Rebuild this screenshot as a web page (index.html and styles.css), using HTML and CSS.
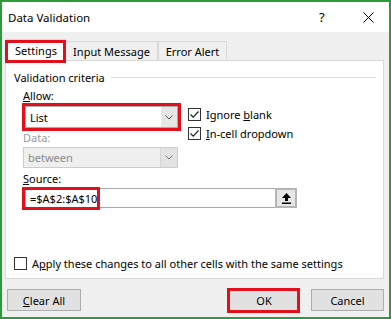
FILE: index.html
```html
<!DOCTYPE html>
<html lang="en">
<head>
  <meta charset="UTF-8" />
  <title>Data Validation</title>
  <link rel="stylesheet" href="styles.css">
</head>
<body>
  <div class="dialog">
    <div class="titlebar">
      <span class="title">Data Validation</span>
      <span class="help">?</span>
      <span class="close">
        <svg width="11" height="11" viewBox="0 0 11 11"><path d="M0.5 0.5 L10.5 10.5 M10.5 0.5 L0.5 10.5" stroke="#000" stroke-width="1" fill="none"/></svg>
      </span>
    </div>

    <div class="content">
      <div class="tabs">
        <div class="tab active tab-settings">Settings<span class="mark"></span></div>
        <div class="tab tab-input">Input Message</div>
        <div class="tab tab-error">Error Alert</div>
      </div>

      <div class="panel">
        <div class="group-title"><span>Validation criteria</span></div>

        <div class="criteria">
          <div class="fields">
            <div class="label"><u>A</u>llow:</div>
            <div class="select marked">
              <span class="value">List</span>
              <span class="drop"><svg width="8" height="5" viewBox="0 0 8 5"><path d="M0.5 0.5 L4 4 L7.5 0.5" stroke="#555" fill="none"/></svg></span>
            </div>
            <div class="label disabled">Data:</div>
            <div class="select disabled">
              <span class="value">between</span>
              <span class="drop"><svg width="8" height="5" viewBox="0 0 8 5"><path d="M0.5 0.5 L4 4 L7.5 0.5" stroke="#777" fill="none"/></svg></span>
            </div>
          </div>

          <div class="checks">
            <div class="check-row">
              <span class="box checked"><svg width="11" height="11" viewBox="0 0 11 11"><path d="M1.5 5.5 L4.2 8.2 L9.5 2.5" stroke="#222" stroke-width="1.2" fill="none"/></svg></span>
              <span>Ignore <u>b</u>lank</span>
            </div>
            <div class="check-row">
              <span class="box checked"><svg width="11" height="11" viewBox="0 0 11 11"><path d="M1.5 5.5 L4.2 8.2 L9.5 2.5" stroke="#222" stroke-width="1.2" fill="none"/></svg></span>
              <span><u>I</u>n-cell dropdown</span>
            </div>
          </div>
        </div>

        <div class="label source-label"><u>S</u>ource:</div>
        <div class="source">
          <div class="source-input">=$A$2:$A$10</div>
          <div class="pick">
            <svg width="11" height="12" viewBox="0 0 11 12"><path d="M5.5 1 L10 6 L7 6 L7 9 L4 9 L4 6 L1 6 Z" fill="#000"/><rect x="1" y="10.5" width="9" height="1.5" fill="#000"/></svg>
          </div>
          <span class="mark source-mark"></span>
        </div>

        <div class="check-row apply">
          <span class="box"></span>
          <span>A<u>p</u>ply these changes to all other cells with the same settings</span>
        </div>
      </div>

      <div class="buttons">
        <button class="btn clear"><u>C</u>lear All</button>
        <div class="right-buttons">
          <button class="btn ok">OK<span class="mark"></span></button>
          <button class="btn cancel">Cancel</button>
        </div>
      </div>
    </div>
  </div>
</body>
</html>
```

FILE: styles.css
```css
body {
  margin: 0;
  font-family: "Noto Sans", "Open Sans", sans-serif;
  font-size: 11px;
  color: #000;
}

.dialog {
  width: 391px;
  height: 319px;
  box-sizing: border-box;
  border: 2px solid #2e9b3b;
  background-color: #f0f0f0;
  display: flex;
  flex-direction: column;
}

.titlebar {
  height: 30px;
  background-color: #fff;
  display: flex;
  align-items: center;
  padding-left: 6px;
  font-size: 11.5px;
}

.title {
  flex: 1;
}

.help {
  width: 8px;
  margin-right: 36px;
  font-size: 13px;
}

.close {
  display: flex;
  margin-right: 15px;
}

.content {
  flex: 1;
  padding: 7px 5px 0 3px;
  display: flex;
  flex-direction: column;
}

/* tabs */
.tabs {
  display: flex;
  align-items: flex-end;
  height: 21px;
  padding-left: 1px;
}

.tab {
  position: relative;
  box-sizing: border-box;
  height: 19px;
  border: 1px solid #d9d9d9;
  border-bottom: none;
  background-color: #f0f0f0;
  display: flex;
  align-items: center;
  justify-content: center;
}

.tab.active {
  height: 22px;
  margin-bottom: -1px;
  background-color: #fff;
  z-index: 1;
}

.tab-settings { width: 60px; }
.tab-input { width: 92px; border-left: none; }
.tab-error { width: 69px; border-left: 1px solid #d9d9d9; }

.mark {
  position: absolute;
  box-sizing: border-box;
  border: 3px solid #e3101c;
  pointer-events: none;
}

.tab .mark {
  left: -2px;
  right: -1px;
  top: 0;
  bottom: -2px;
}

/* panel */
.panel {
  box-sizing: border-box;
  height: 219px;
  border: 1px solid #d9d9d9;
  background-color: #fff;
  padding: 8px 0 0 0;
}

.group-title {
  display: flex;
  align-items: center;
  height: 16px;
  padding-left: 8px;
  margin-right: 7px;
}

.group-title::after {
  content: "";
  flex: 1;
  height: 1px;
  background-color: #dcdcdc;
  margin-left: 6px;
}

.label {
  height: 16px;
  line-height: 16px;
  margin-left: 17px;
}

.label.disabled {
  color: #9a9a9a;
}

.criteria {
  display: flex;
}

.fields {
  width: 182px;
  padding-top: 3px;
}

.select {
  box-sizing: border-box;
  width: 153px;
  height: 22px;
  margin: 2px 0 0 19px;
  border: 1px solid #a9a9a9;
  background-color: #fff;
  display: flex;
  align-items: stretch;
}

.select.marked {
  outline: 3px solid #e3101c;
}

.select .value {
  flex: 1;
  padding-left: 4px;
  display: flex;
  align-items: center;
}

.select .drop {
  width: 16px;
  background-color: #e6e6e6;
  display: flex;
  align-items: center;
  justify-content: center;
}

.fields .label.disabled {
  margin-top: 2px;
}

.select.disabled {
  height: 21px;
  margin-top: 1px;
  margin-left: 17px;
  width: 155px;
  border-color: #cccccc;
  background-color: #efefef;
  color: #8a8a8a;
}

.select.disabled .drop {
  background-color: #e3e3e3;
  border-left: 1px solid #d4d4d4;
}

.checks {
  padding-top: 21px;
  display: flex;
  flex-direction: column;
  gap: 3px;
}

.check-row {
  display: flex;
  align-items: center;
  height: 16px;
  gap: 5px;
}

.box {
  box-sizing: border-box;
  width: 13px;
  height: 13px;
  border: 1px solid #333;
  background-color: #fff;
  display: flex;
  align-items: center;
  justify-content: center;
}

.source-label {
  margin-top: 3px;
}

.source {
  position: relative;
  display: flex;
  margin: 1px 0 0 19px;
  height: 20px;
}

.source-input {
  box-sizing: border-box;
  width: 250px;
  border: 1px solid #a9a9a9;
  border-right: none;
  padding-left: 4px;
  display: flex;
  align-items: center;
}

.pick {
  box-sizing: border-box;
  width: 22px;
  border: 2px solid #b5b5b5;
  background-color: #e6e6e6;
  display: flex;
  align-items: center;
  justify-content: center;
}

.source-mark {
  left: -3px;
  top: -1px;
  width: 78px;
  height: 23px;
}

.apply {
  margin: 47px 0 0 8px;
}

/* bottom buttons */
.buttons {
  display: flex;
  justify-content: space-between;
  margin-top: 10px;
  padding-left: 2px;
}

.right-buttons {
  display: flex;
  gap: 12px;
}

.btn {
  position: relative;
  box-sizing: border-box;
  height: 22px;
  border: 1px solid #adadad;
  background-color: #e1e1e1;
  font-family: inherit;
  font-size: 11px;
  color: #000;
  padding: 0;
}

.clear { width: 74px; }
.ok { width: 70px; border-color: #0078d7; }
.cancel { width: 73px; }

.ok .mark {
  left: -3px;
  right: -2px;
  top: -2px;
  bottom: -3px;
}
```
